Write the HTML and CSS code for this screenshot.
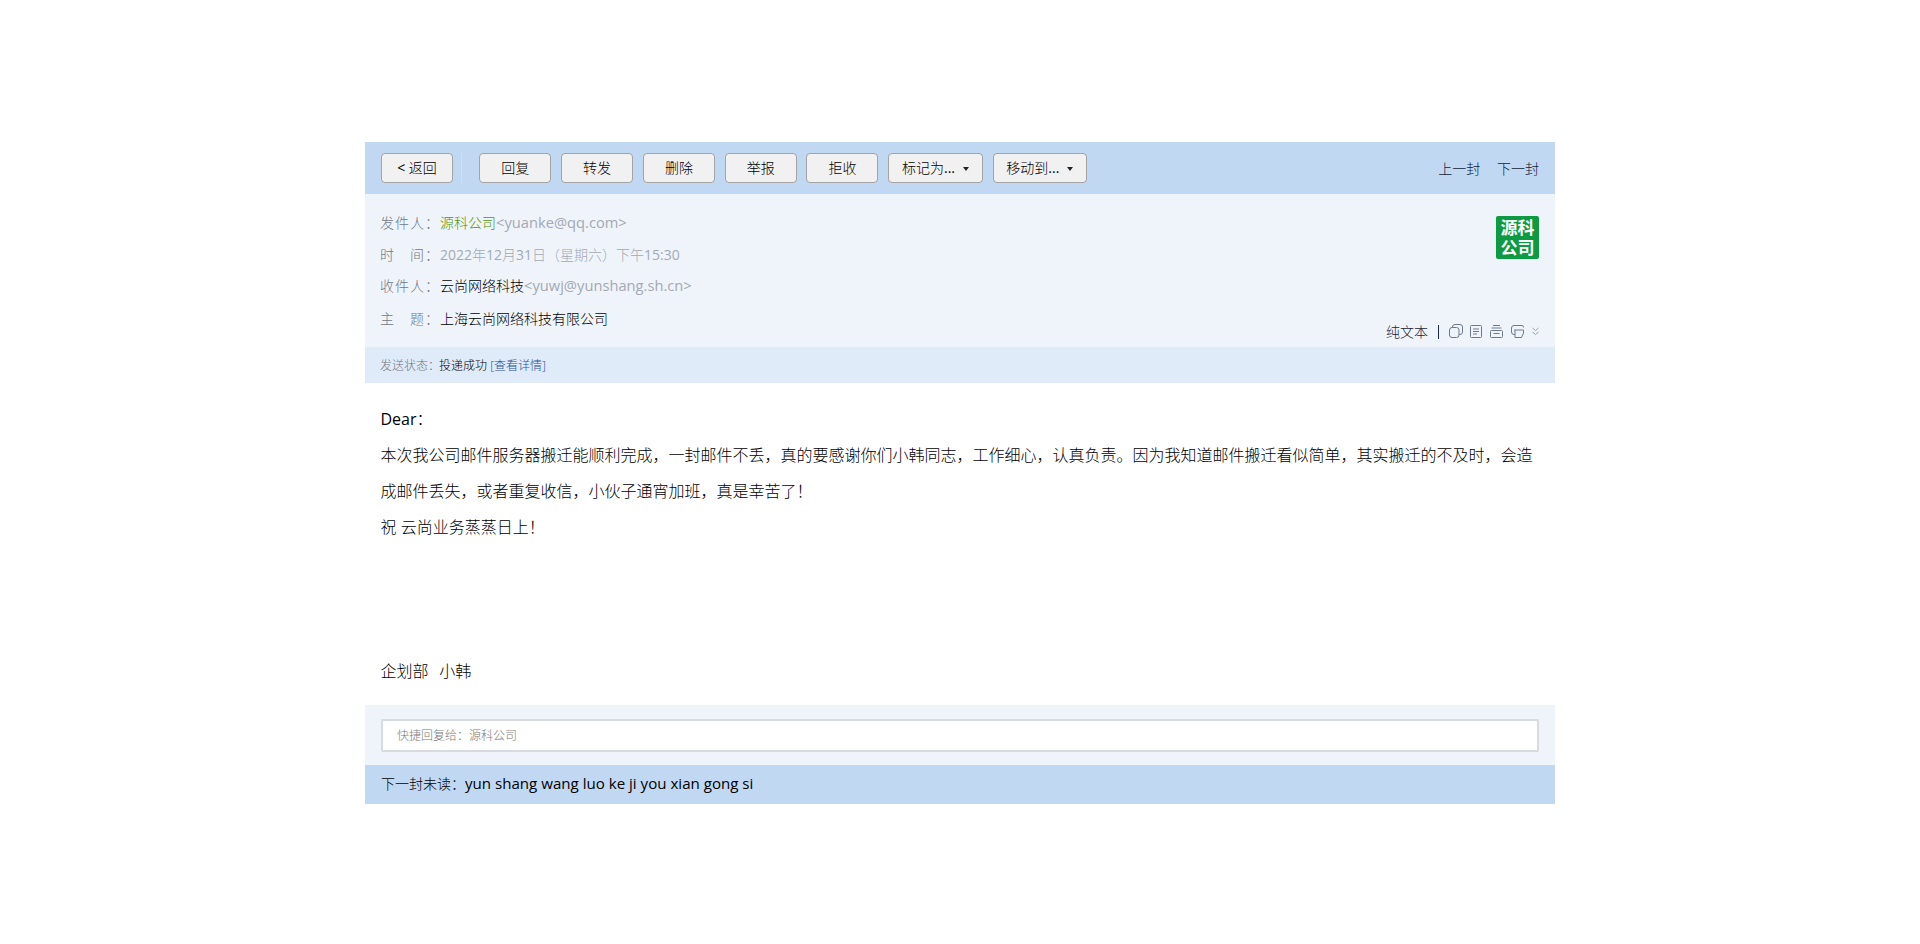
FILE: index.html
```html
<!DOCTYPE html>
<html>

<head>
    <title>邮件详情</title>
    <link rel="stylesheet" href="styles.css">
</head>

<body>
    <div class="mail">
        <div class="toolbar">
            <button class="btn"><span class="latin">&lt;</span> 返回</button>
            <span class="sep"></span>
            <button class="btn">回复</button>
            <button class="btn">转发</button>
            <button class="btn">删除</button>
            <button class="btn">举报</button>
            <button class="btn">拒收</button>
            <button class="btn btn-menu">标记为<span class="latin">...</span><i class="caret"></i></button>
            <button class="btn btn-menu">移动到<span class="latin">...</span><i class="caret"></i></button>
            <div class="pager">
                <a>上一封</a>
                <a>下一封</a>
            </div>
        </div>

        <div class="head">
            <div class="row row-from"><span class="key">发件人：</span><span class="green">源科公司</span><span class="addr mail-addr">&lt;yuanke@qq.com&gt;</span></div>
            <div class="row row-time"><span class="key key-split"><b>时</b><b>间</b>：</span><span class="addr"><span class="latin">2022</span>年<span class="latin">12</span>月<span class="latin">31</span>日（星期六）下午<span class="latin">15:30</span></span></div>
            <div class="row row-to"><span class="key">收件人：</span><span>云尚网络科技</span><span class="addr mail-addr">&lt;yuwj@yunshang.sh.cn&gt;</span></div>
            <div class="row row-subject"><span class="key key-split"><b>主</b><b>题</b>：</span><span>上海云尚网络科技有限公司</span></div>

            <div class="logo">源科<br>公司</div>

            <div class="tools">
                <a>纯文本</a>
                <span class="bar"></span>
                <svg width="14" height="14" viewBox="0 0 14 14"><rect x="0.500" y="3.500" width="9.500" height="10" rx="2.500"/><path d="M3.500 3.500V3A2.500 2.500 0 0 1 6 0.500h5A2.500 2.500 0 0 1 13.500 3v5a2.500 2.500 0 0 1-2.500 2.500h-1"/></svg>
                <svg class="gap-8" width="12" height="13" viewBox="0 0 12 13"><rect x="0.500" y="0.500" width="11" height="12" rx="1"/><path d="M3 4h6M3 6.500h6M3 9h4"/></svg>
                <svg class="gap-8" width="13" height="13" viewBox="0 0 13 13"><path d="M3 0.500h7M1.500 3h10"/><rect x="0.500" y="5.500" width="12" height="7" rx="1"/><path d="M3.500 8.500h6"/></svg>
                <svg class="gap-8" width="13" height="13" viewBox="0 0 13 13"><path d="M12.500 2.500V2A1.500 1.500 0 0 0 11 0.500H3A2.500 2.500 0 0 0 0.500 3v4A2.500 2.500 0 0 0 3 9.500h1"/><path d="M3 5h9.500v3L10.500 12.500h-6.500V5"/></svg>
                <svg class="more" width="7" height="9" viewBox="0 0 7 9"><path d="M0.500 1l3 2.500 3-2.500M0.500 5l3 2.500 3-2.500"/></svg>
            </div>
        </div>

        <div class="status">
            <span class="status-key">发送状态：</span><span>投递成功</span> <a>[查看详情]</a>
        </div>

        <div class="content">
            <p><span class="latin">Dear</span>：</p>
            <p>本次我公司邮件服务器搬迁能顺利完成，一封邮件不丢，真的要感谢你们小韩同志，工作细心，认真负责。因为我知道邮件搬迁看似简单，其实搬迁的不及时，会造成邮件丢失，或者重复收信，小伙子通宵加班，真是幸苦了！</p>
            <p>祝 云尚业务蒸蒸日上！</p>
            <p class="sign">企划部&nbsp; 小韩</p>
        </div>

        <div class="reply">
            <div class="reply-box">快捷回复给：源科公司</div>
        </div>

        <div class="next"><span class="next-key">下一封未读：</span><span class="latin">yun shang wang luo ke ji you xian gong si</span></div>
    </div>
</body>

</html>
```

FILE: styles.css
```css
/* Page */
body {
    margin: 0;
    background-color: #fff;
    font-family: "Open Sans", "Noto Sans CJK SC", sans-serif;
    font-size: 14px;
    font-weight: 300;
    color: #000;
}

/* Latin text stays at regular weight, only the CJK glyphs are light */
.latin {
    font-weight: 400;
}

.mail {
    width: 1190px;
    margin: 142px auto 0;
}

/* Toolbar */
.toolbar {
    display: flex;
    align-items: center;
    height: 52px;
    padding: 0 16px;
    background-color: #c1d8f3;
}

.btn {
    width: 72px;
    height: 30px;
    margin-right: 9.800px;
    padding: 0;
    background-color: #f1f1f1;
    border: 1px solid #a3a3a3;
    border-radius: 4px;
    font-family: inherit;
    font-size: 14px;
    font-weight: 300;
    line-height: 28px;
    color: #000;
}

.btn-menu {
    width: 94.500px;
}

.caret {
    display: inline-block;
    margin-left: 8px;
    vertical-align: middle;
    border-top: 4px solid #222;
    border-left: 3px solid transparent;
    border-right: 3px solid transparent;
}

.sep {
    width: 1px;
    height: 30px;
    margin: 0 17.500px 0 -2px;
    background-color: #d2e0f2;
}

.pager {
    margin-left: auto;
    color: #0f1d3a;
}

.pager a + a {
    margin-left: 13px;
}

/* Mail header */
.head {
    position: relative;
    height: 153px;
    padding: 0 15px;
    background-color: #eff4fb;
    box-sizing: border-box;
}

.row {
    height: 20px;
    line-height: 20px;
    white-space: nowrap;
}

.row-from {
    padding-top: 18px;
}

.row-time {
    padding-top: 13px;
}

.row-to {
    padding-top: 10px;
}

.row-subject {
    padding-top: 14px;
}

.key {
    display: inline-block;
    width: 60px;
    letter-spacing: 1px;
    color: #6f7887;
}

.key-split {
    display: inline-flex;
}

.key-split b {
    width: 32px;
    font-weight: 300;
}

.key-split b + b {
    width: 15px;
}

.green {
    color: #4f9606;
}

.addr {
    color: #a3a9b3;
}

.mail-addr {
    font-size: 14.700px;
    font-weight: 400;
}

.logo {
    position: absolute;
    top: 22px;
    right: 16px;
    width: 43px;
    height: 43px;
    padding-top: 2px;
    background-color: #0d9a43;
    border-radius: 2px;
    box-sizing: border-box;
    font-size: 17px;
    font-weight: bold;
    line-height: 20px;
    text-align: center;
    color: #fff;
}

.tools {
    position: absolute;
    right: 16px;
    bottom: 6px;
    display: flex;
    align-items: center;
    height: 20px;
    color: #0f1d3a;
}

.bar {
    width: 1px;
    height: 14px;
    margin: 2px 10px 0;
    background-color: #1c2b4a;
}

.tools svg {
    margin-right: 7px;
    fill: none;
    stroke: #6f7a89;
    stroke-width: 1;
}

.tools svg.gap-8 {
    margin-right: 8px;
}

.tools svg.more {
    margin: 0;
    stroke: #9aa3ae;
}

/* Send status */
.status {
    height: 36px;
    padding: 0 15px;
    background-color: #e0ebf9;
    font-size: 12px;
    line-height: 37px;
}

.status-key {
    margin-right: -1px;
    color: #6f7887;
}

.status a {
    color: #1f4f96;
}

/* Body text */
.content {
    height: 322px;
    padding: 18px 16px 0 15.500px;
    box-sizing: border-box;
    font-size: 16px;
    line-height: 36px;
}

.content p {
    margin: 0;
}

.sign {
    margin-top: 108px !important;
    word-spacing: 1.200px;
}

/* Quick reply */
.reply {
    height: 60px;
    padding: 14px 16px 0;
    background-color: #eff4fa;
    box-sizing: border-box;
}

.reply-box {
    height: 33px;
    padding-left: 14px;
    background-color: #fff;
    border: 2px solid #d7dbe0;
    border-radius: 2px;
    box-sizing: border-box;
    font-size: 12px;
    line-height: 29px;
    color: #7a7a7a;
}

.next {
    height: 39px;
    padding: 0 16px;
    background-color: #c1d8f3;
    font-size: 15.100px;
    line-height: 37px;
}

.next-key {
    font-size: 14px;
}
```
